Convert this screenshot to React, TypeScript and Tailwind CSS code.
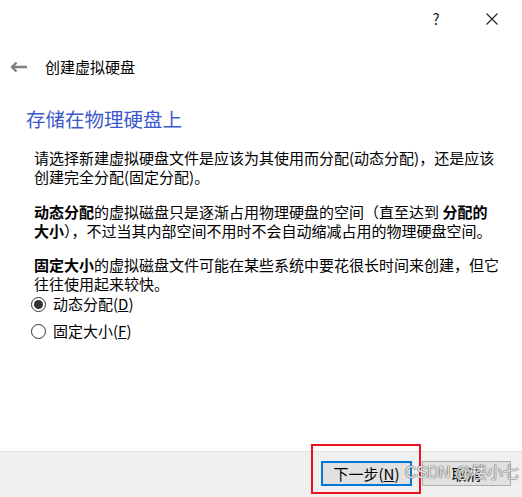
import React from "react";

const font = "font-['Noto_Sans_CJK_SC','Noto_Sans',sans-serif]";

function Radio({ checked, label, keyChar }: { checked: boolean; label: string; keyChar: string }) {
  return (
    <div className="flex items-center h-[22px] pl-[31px]">
      <span className="w-[15px] h-[15px] rounded-full border border-[#333] flex items-center justify-center bg-white">
        {checked && <span className="w-[9px] h-[9px] rounded-full bg-[#333]" />}
      </span>
      <span className="ml-[7px] text-[15px] leading-[22px] text-black">
        {label}(<u>{keyChar}</u>)
      </span>
    </div>
  );
}

export default function App() {
  return (
    <div className={`relative w-[522px] h-[497px] bg-white flex flex-col overflow-hidden ${font}`}>
      {/* title bar buttons */}
      <div className="h-[38px] flex items-center justify-end text-[#222]">
        <span className="w-[20px] text-center text-[15px]">?</span>
        <span className="w-[40px]" />
        <svg className="mr-[24px]" width="12" height="12" viewBox="0 0 12 12">
          <path d="M0.5 0.5 L11.5 11.5 M11.5 0.5 L0.5 11.5" stroke="#222" strokeWidth="1.1" fill="none" />
        </svg>
      </div>

      {/* wizard header */}
      <div className="mt-[18px] h-[22px] flex items-center">
        <svg className="ml-[10px]" width="17" height="12" viewBox="0 0 17 12">
          <path d="M17 6 H2 M6.5 1.5 L2 6 L6.5 10.5" stroke="#808080" strokeWidth="2.4" fill="none" />
        </svg>
        <span className="ml-[18px] text-[15px] text-black">创建虚拟硬盘</span>
      </div>

      <h1 className="mt-[27px] ml-[26px] text-[19.5px] leading-[28px] text-[#3d58cc] font-normal">
        存储在物理硬盘上
      </h1>

      <div className="ml-[34px] text-[15px] leading-[19px] text-black whitespace-nowrap">
        <p className="mt-[15px]">
          请选择新建虚拟硬盘文件是应该为其使用而分配(动态分配)，还是应该
          <br />
          创建完全分配(固定分配)。
        </p>
        <p className="mt-[16px]">
          <b>动态分配</b>的虚拟磁盘只是逐渐占用物理硬盘的空间（直至达到 <b>分配的</b>
          <br />
          <b>大小</b>），不过当其内部空间不用时不会自动缩减占用的物理硬盘空间。
        </p>
        <p className="mt-[15px]">
          <b>固定大小</b>的虚拟磁盘文件可能在某些系统中要花很长时间来创建，但它
          <br />
          往往使用起来较快。
        </p>
      </div>

      <div className="mt-[0px]">
        <Radio checked label="动态分配" keyChar="D" />
      </div>
      <div className="mt-[5px]">
        <Radio checked={false} label="固定大小" keyChar="F" />
      </div>

      <div className="flex-1" />

      {/* footer buttons */}
      <div className="h-[46px] border-t border-[#dfdfdf] bg-[#f0f0f0] flex justify-end items-start pt-[9px] pr-[11px] gap-[10px]">
        <button className="w-[91px] h-[25px] border-2 border-[#0078d7] bg-[#e1e1e1] text-[15px] leading-[20px] text-black">
          下一步(<u>N</u>)
        </button>
        <button className="w-[89px] h-[25px] border border-[#adadad] bg-[#e1e1e1] text-[15px] leading-[22px] text-black">
          取消
        </button>
      </div>

      {/* highlight box around next button */}
      <div className="absolute left-[311px] top-[444px] w-[110px] h-[50px] border-2 border-[#e8141f] pointer-events-none" />

      {/* watermark */}
      <div className="absolute left-[405px] top-[463px] text-[16px] leading-[19px] text-[#e4e4e4] [text-shadow:0_0_1px_#666,0_0_1px_#666,0_0_1px_#888] font-['Liberation_Sans','Noto_Sans_CJK_SC',sans-serif] whitespace-nowrap pointer-events-none">
        CSDN @楼小七
      </div>
    </div>
  );
}
